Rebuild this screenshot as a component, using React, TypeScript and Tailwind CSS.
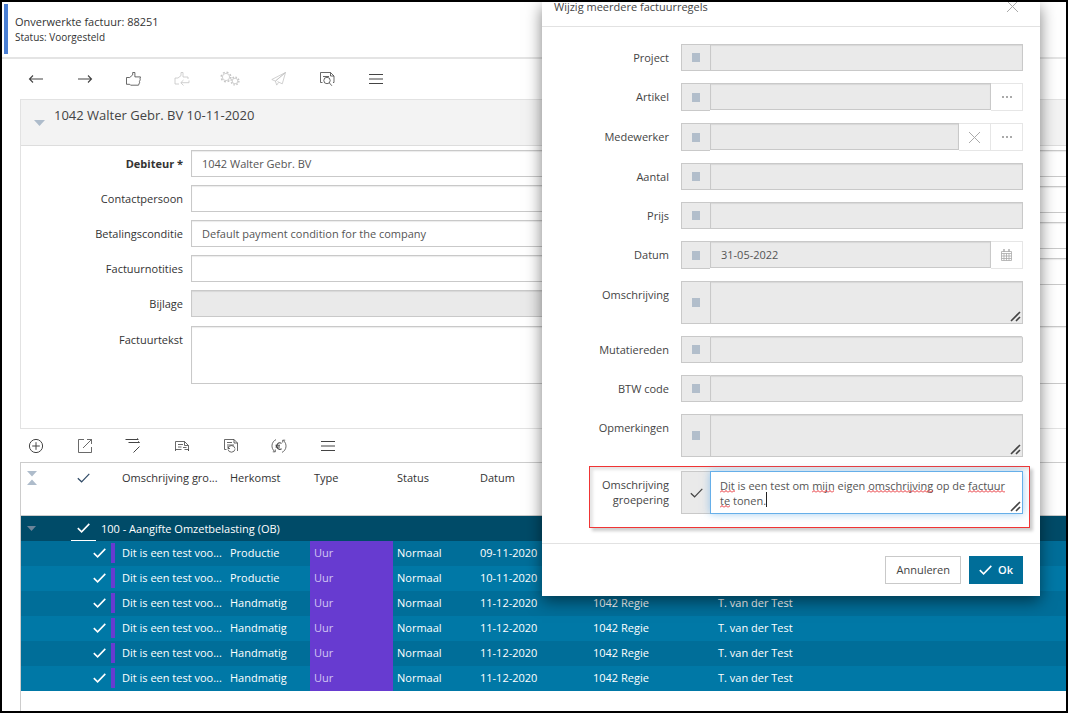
import { useId } from "react";
import type { ReactNode } from "react";

const strokeProps = {
  fill: "none",
  stroke: "currentColor",
  strokeWidth: 0.8,
  width: 16,
  height: 16,
  viewBox: "0 0 16 16",
  "aria-hidden": true,
} as const;

const icons: Record<string, ReactNode> = {
  back: <svg {...strokeProps} strokeWidth={1.1}><path d="M15 8H1.5M5 4.5 1.5 8 5 11.5" /></svg>,
  forward: <svg {...strokeProps} strokeWidth={1.1}><path d="M1 8h13.5M11 4.5 14.5 8 11 11.5" /></svg>,
  thumb: (
    <svg {...strokeProps}>
      <path d="M1.5 6.5h3.2l3-2.6V1.5h2.2v4.4h5.6l-.6 2.2.4.6-.9 1.9.3.6-1.2 3H5.6l-.8-.9H1.5z" />
    </svg>
  ),
  thumbBack: (
    <svg {...strokeProps}>
      <path d="M1 13V7h3l3-2.4V1.5h2V6h5v2M1 13h4M15 9.5v2.2H7M9.5 9 6.8 11.7 9.5 14.5" />
    </svg>
  ),
  gears: (
    <svg {...strokeProps} width={20} viewBox="0 0 20 16">
      <circle cx="6" cy="6" r="3.6" />
      <circle cx="6" cy="6" r="4.8" strokeDasharray="1.9 1.87" strokeWidth="1.5" />
      <circle cx="15" cy="10" r="2.8" />
      <circle cx="15" cy="10" r="3.9" strokeDasharray="1.5 1.56" strokeWidth="1.4" />
    </svg>
  ),
  send: <svg {...strokeProps}><path d="M14.5 1.5.8 8.5l3.6 1.6zM14.5 1.5 4.4 10.1l1.3 4 1.8-2.6M14.5 1.5l-3.2 11.3-4.8-2.2" /></svg>,
  preview: (
    <svg {...strokeProps}>
      <path d="M3.5 11.5h-2v-10h10l3.5 3.5v6.5h-1M4 5.5h6M11.5 1.5V5H15" />
      <circle cx="8" cy="9.5" r="3.2" />
      <path d="m10.3 11.8 2.6 3" />
    </svg>
  ),
  menu: <svg {...strokeProps} strokeWidth={1.2}><path d="M1 3.5h14M1 8h14M1 12.5h14" /></svg>,
  add: <svg {...strokeProps} strokeWidth={1}><circle cx="8" cy="8" r="6.6" /><path d="M8 4.2v7.6M4.2 8h7.6" /></svg>,
  external: <svg {...strokeProps}><path d="M7 1.5H1.5v13h13V9M6 10l8.5-8.5M10 1.5h4.5V6" /></svg>,
  rows: <svg {...strokeProps} strokeWidth={1}><path d="M.5 1.5h12.5M3.5 4.5h11M12 .5l1.5 1M13 3.5l1.5 1M8.5 14.5l6-6M5 4.5h3" /></svg>,
  line: <svg {...strokeProps}><path d="M1.5 13V3.5h9l4 4V13M1.5 11.5h6M4 6.5h5M4 9h3.5M10.5 3.5v4h4M14.5 13v-1.5h-4M9 9.5h3.5" /></svg>,
  pageRefresh: (
    <svg {...strokeProps}>
      <path d="M3.5 11.5h-2v-10h9.5l3.5 3.5v8M4 4.5h5M11 1.5V5h3.5M4 7h7" />
      <path d="M5 10.2a3.6 3.6 0 0 1 7 .3M12 11.3a3.6 3.6 0 0 1-7 .2M5 8v2.5h2" />
    </svg>
  ),
  euro: (
    <svg {...strokeProps}>
      <path d="M5 1.6A7 7 0 0 0 3.6 13.4M1.8 13.8h2.5v-2.3M11 14.4A7 7 0 0 0 12.4 2.6M14.2 2.2h-2.5v2.3" />
      <path d="M10.6 5.4A3.2 3.2 0 1 0 10.6 10.8M4.5 7.3H9M4.5 9H9" strokeWidth={1.1} />
    </svg>
  ),
};

function Check({ className, thin }: { className?: string; thin?: boolean }) {
  return (
    <svg
      className={className}
      width="13"
      height="10"
      viewBox="0 0 13 10"
      fill="none"
      stroke="currentColor"
      strokeWidth={thin ? 1.2 : 1.6}
      aria-hidden
    >
      <path d="M.8 5.2 4.6 8.8 12.3.9" />
    </svg>
  );
}

function Cross() {
  return (
    <svg width="13" height="13" viewBox="0 0 13 13" fill="none" stroke="currentColor" strokeWidth="1" aria-hidden>
      <path d="m1 1 11 11M12 1 1 12" />
    </svg>
  );
}

type Tool = { icon: string; label: string; disabled?: boolean };

function Toolbar({ tools, className }: { tools: Tool[]; className: string }) {
  return (
    <div className={`grid pl-[10px] ${className}`}>
      {tools.map((t) => (
        <button
          key={t.label}
          type="button"
          aria-label={t.label}
          disabled={t.disabled}
          className="flex items-center justify-center text-[#444] disabled:text-[#c4c4c4]"
        >
          {icons[t.icon]}
        </button>
      ))}
    </div>
  );
}

const topTools: Tool[] = [
  { icon: "back", label: "Vorige" },
  { icon: "forward", label: "Volgende" },
  { icon: "thumb", label: "Goedkeuren" },
  { icon: "thumbBack", label: "Terugzetten", disabled: true },
  { icon: "gears", label: "Verwerken", disabled: true },
  { icon: "send", label: "Versturen", disabled: true },
  { icon: "preview", label: "Voorbeeld" },
  { icon: "menu", label: "Menu" },
];

const lineTools: Tool[] = [
  { icon: "add", label: "Toevoegen" },
  { icon: "external", label: "Openen" },
  { icon: "rows", label: "Regels wijzigen" },
  { icon: "line", label: "Tekstregel" },
  { icon: "pageRefresh", label: "Vernieuwen" },
  { icon: "euro", label: "Valuta" },
  { icon: "menu", label: "Meer" },
];

const inputBase =
  "block min-w-0 border border-[#c9c9c9] bg-white px-2.5 text-[#555] shadow-[inset_0_1px_1px_rgba(0,0,0,0.08)] outline-none disabled:bg-[#eaeaea]";

function FormRow({ label, value, bold, disabled, area }: { label: string; value?: string; bold?: boolean; disabled?: boolean; area?: boolean }) {
  const id = useId();
  return (
    <div className="flex gap-2">
      <label htmlFor={id} className={`w-[162px] shrink-0 text-right leading-[27px] ${bold ? "font-bold" : ""}`}>
        {label}
      </label>
      {area ? (
        <textarea id={id} className={`${inputBase} h-[58px] flex-1 resize-none`} />
      ) : (
        <input id={id} defaultValue={value} disabled={disabled} className={`${inputBase} h-[27px] flex-1`} />
      )}
    </div>
  );
}

const lines = [
  ["Productie", "09-11-2020", "", ""],
  ["Productie", "10-11-2020", "", ""],
  ["Handmatig", "11-12-2020", "1042 Regie", "T. van der Test"],
  ["Handmatig", "11-12-2020", "1042 Regie", "T. van der Test"],
  ["Handmatig", "11-12-2020", "1042 Regie", "T. van der Test"],
  ["Handmatig", "11-12-2020", "1042 Regie", "T. van der Test"],
];

function LinesTable() {
  return (
    <table className="w-full table-fixed border-collapse text-left">
      <colgroup>
        <col className="w-[50px]" />
        <col className="w-[47px]" />
        <col className="w-[108px]" />
        <col className="w-[84px]" />
        <col className="w-[83px]" />
        <col className="w-[83px]" />
        <col className="w-[113px]" />
        <col className="w-[125px]" />
        <col />
      </colgroup>
      <thead>
        <tr className="h-[52px] border-b border-[#ccc] align-top text-[#333] *:px-1 *:pt-[7px] *:font-normal *:leading-4">
          <th>
            <svg className="ml-0.5 mt-px" width="10" height="14" viewBox="0 0 10 14" fill="#aebccb" aria-hidden>
              <path d="M0 0h10L5 5.5zM0 14h10L5 8.5z" />
            </svg>
          </th>
          <th><Check thin className="ml-0.5 mt-[3px] text-[#2f4a66]" /></th>
          <th className="truncate">Omschrijving gro...</th>
          <th>Herkomst</th>
          <th>Type</th>
          <th>Status</th>
          <th>Datum</th>
          <th />
          <th />
        </tr>
      </thead>
      <tbody className="text-white">
        <tr className="h-[25px] bg-[#004b68]">
          <td className="p-0">
            <svg className="ml-1.5" width="9" height="5" viewBox="0 0 9 5" fill="#6c8499" aria-hidden>
              <path d="M0 0h9L4.5 5z" />
            </svg>
          </td>
          <td colSpan={8} className="p-0">
            <div className="flex h-[25px] items-stretch gap-[5px]">
              <span className="flex w-[25px] items-center justify-center border-b border-white"><Check /></span>
              <span className="leading-[25px]">100 - Aangifte Omzetbelasting (OB)</span>
            </div>
          </td>
        </tr>
        {lines.map(([origin, date, project, employee], i) => (
          <tr key={i} className="h-[25px] odd:bg-[#0078a6] even:bg-[#006e99] *:px-1 *:py-0">
            <td />
            <td>
              <div className="-mr-px flex items-center justify-end gap-[5px]">
                <Check />
                <span className="h-5 w-1 bg-[#673bd0]" />
              </div>
            </td>
            <td className="truncate">Dit is een test voo...</td>
            <td>{origin}</td>
            <td className="bg-[#673bd0] text-[#d2c6f2]">Uur</td>
            <td>Normaal</td>
            <td>{date}</td>
            <td>{project}</td>
            <td>{employee}</td>
          </tr>
        ))}
      </tbody>
    </table>
  );
}

function Grip() {
  return (
    <svg className="pointer-events-none absolute bottom-0.5 right-0.5" width="11" height="11" viewBox="0 0 11 11" stroke="#444" strokeWidth="1.6" aria-hidden>
      <path d="M1 10 10 1M6 10l4-4" />
    </svg>
  );
}

function Dots() {
  return (
    <svg width="10" height="2" viewBox="0 0 10 2" fill="currentColor" aria-hidden>
      <path d="M0 0h2v2H0zM4 0h2v2H4zM8 0h2v2H8z" />
    </svg>
  );
}

function Calendar() {
  return (
    <svg width="11" height="12" viewBox="0 0 11 12" fill="none" stroke="currentColor" strokeWidth="0.8" aria-hidden>
      <path d="M.5 2.5h10v9H.5zM.5 4.5h10M.5 7h10M.5 9.5h10M3 4.5v7M5.5 4.5v7M8 4.5v7" />
      <path d="M3 0v3M8 0v3" strokeWidth="1.4" />
    </svg>
  );
}

const addons: Record<string, { label: string; icon: ReactNode }> = {
  search: { label: "Zoeken", icon: <Dots /> },
  clear: { label: "Wissen", icon: <Cross /> },
  date: { label: "Kalender", icon: <Calendar /> },
};

type DialogFieldProps = { label: string; value?: string; area?: boolean; rounded?: boolean; buttons?: string[] };

function DialogField({ label, value, area, rounded, buttons = [] }: DialogFieldProps) {
  const id = useId();
  return (
    <div className="flex gap-3">
      <label htmlFor={id} className="w-[127px] shrink-0 text-right leading-[27px]">{label}</label>
      <div className={`flex min-w-0 flex-1 ${area ? "h-[43px]" : buttons.length ? "h-7" : "h-[27px]"}`}>
        <button
          type="button"
          aria-label={`${label} wijzigen`}
          className="flex w-[29px] shrink-0 items-center justify-center border border-r-0 border-[#c9c9c9] bg-[#eaeaea]"
        >
          <span className="h-[9px] w-2 bg-[#b2becb]" />
        </button>
        {area ? (
          <div className="relative flex flex-1">
            <textarea id={id} disabled className={`${inputBase} flex-1 resize-none`} />
            <Grip />
          </div>
        ) : (
          <input id={id} disabled defaultValue={value} className={`${inputBase} h-[27px] flex-1 ${rounded ? "rounded-r-xs" : ""}`} />
        )}
        {buttons.map((b) => (
          <button
            key={b}
            type="button"
            disabled
            aria-label={`${label}: ${addons[b].label}`}
            className="flex w-8 shrink-0 items-center justify-center border border-l-0 border-[#e6e6e6] text-[#aaa]"
          >
            {addons[b].icon}
          </button>
        ))}
      </div>
    </div>
  );
}

function Squiggle({ className }: { className: string }) {
  const id = useId();
  return (
    <svg className={`pointer-events-none absolute h-[3px] ${className}`} aria-hidden>
      <pattern id={id} width="4" height="3" patternUnits="userSpaceOnUse">
        <path d="M0 2.5 2 .5l2 2" fill="none" stroke="#e5252c" strokeWidth="1" />
      </pattern>
      <rect width="100%" height="3" fill={`url(#${id})`} />
    </svg>
  );
}

function EditDialog() {
  return (
    <section
      role="dialog"
      aria-labelledby="dialog-title"
      className="absolute right-[26px] top-0 w-[498px] bg-white text-[#444] shadow-[0_5px_15px_rgba(0,0,0,0.5)]"
    >
      <header className="flex h-[25px] items-start justify-between border-b border-[#e2e2e2] pl-3 pr-[21px]">
        <h2 id="dialog-title" className="leading-[10px]">Wijzig meerdere factuurregels</h2>
        <button type="button" aria-label="Sluiten" className="-mt-0.5 text-[#aaa]"><Cross /></button>
      </header>
      <div className="flex flex-col gap-3 pr-[17px] pt-[17px]">
        <DialogField label="Project" />
        <DialogField label="Artikel" buttons={["search"]} />
        <DialogField label="Medewerker" buttons={["clear", "search"]} />
        <DialogField label="Aantal" />
        <DialogField label="Prijs" />
        <DialogField label="Datum" value="31-05-2022" buttons={["date"]} />
        <DialogField label="Omschrijving" area />
        <DialogField label="Mutatiereden" rounded />
        <DialogField label="BTW code" rounded />
        <DialogField label="Opmerkingen" area />
      </div>
      <div className="ml-[47px] mr-2.5 mt-[9px] flex gap-3 border border-[#f03434] pb-[13px] pr-1.5 pt-1 shadow-[3px_3px_3px_rgba(0,0,0,0.2),inset_3px_3px_3px_rgba(0,0,0,0.1)]">
        <label htmlFor="grouping" className="w-[79px] shrink-0 pt-1.5 text-right leading-[15px]">
          Omschrijving groepering
        </label>
        <div className="flex min-w-0 flex-1">
          <button
            type="button"
            aria-label="Omschrijving groepering wijzigen"
            className="flex w-[29px] shrink-0 items-center justify-center border border-r-0 border-[#c9c9c9] bg-[#eaeaea]"
          >
            <Check thin />
          </button>
          <div className="relative flex h-[43px] flex-1">
            <textarea
              id="grouping"
              spellCheck={false}
              defaultValue={"Dit is een test om mijn eigen omschrijving op de factuur\nte tonen."}
              className="block min-w-0 flex-1 resize-none overflow-hidden border border-[#66afe9] px-[9px] pt-1.5 leading-[15px] text-[#555] shadow-[0_0_8px_rgba(102,175,233,0.6)] outline-none"
            />
            <Squiggle className="left-2.5 top-[19px] w-[15px]" />
            <Squiggle className="left-[102px] top-[19px] w-[22px]" />
            <Squiggle className="left-[157px] top-[19px] w-[66px]" />
            <Squiggle className="left-[258px] top-[19px] w-[37px]" />
            <Squiggle className="left-2.5 top-[34px] w-2.5" />
            <span className="absolute left-14 top-[21px] h-[15px] w-px bg-[#222]" />
            <Grip />
          </div>
        </div>
      </div>
      <footer className="mt-[15px] flex justify-end gap-2 border-t border-[#e2e2e2] pb-3 pr-[17px] pt-3">
        <button type="button" className="h-7 border border-[#c9c9c9] px-2.5">Annuleren</button>
        <button type="button" className="flex h-7 items-center gap-1.5 bg-[#006e99] px-2.5 font-semibold text-white">
          <Check />
          Ok
        </button>
      </footer>
    </section>
  );
}

export default function App() {
  return (
    <main className="relative flex min-h-screen flex-col overflow-hidden border-2 border-black bg-white font-['Open_Sans',sans-serif] text-[11px] text-[#333]">
      <header className="border-b-2 border-[#e4e4e4] pb-[3px] pl-0.5 pt-0.5">
        <div className="flex h-[50px] flex-col justify-center border-l-4 border-[#4a7fd4] pl-[7px]">
          <h1 className="leading-4">Onverwerkte factuur: 88251</h1>
          <p className="text-[10px] leading-[14px]">Status: Voorgesteld</p>
        </div>
      </header>
      <Toolbar tools={topTools} className="h-10 w-[398px] grid-cols-8" />

      <section className="ml-[18px] border-y border-l border-[#e2e2e2]">
        <div className="flex h-[46px] items-start border-b border-[#ddd] bg-[#f3f3f3] pl-[13px] pt-[7px]">
          <button type="button" aria-label="Inklappen" className="pt-[13px]">
            <svg width="11" height="6" viewBox="0 0 11 6" fill="#aebccb" aria-hidden><path d="M0 0h11L5.500 6z" /></svg>
          </button>
          <h2 className="pl-[9px] text-[13px] leading-4 text-[#444]">1042 Walter Gebr. BV 10-11-2020</h2>
        </div>
        <form className="pb-11 pt-1">
          <div className="grid grid-cols-[3fr_1fr]">
            <div className="flex flex-col gap-2">
              <FormRow label="Debiteur *" value="1042 Walter Gebr. BV" bold />
              <FormRow label="Contactpersoon" />
              <FormRow label="Betalingsconditie" value="Default payment condition for the company" />
              <FormRow label="Factuurnotities" />
              <FormRow label="Bijlage" disabled />
            </div>
            <div className="-mr-px flex flex-col gap-[9px] pl-4">
              <input aria-label="Referentie" className={`${inputBase} h-[27px]`} />
              <input aria-label="Factuurdatum" className={`${inputBase} h-[27px]`} />
              <input aria-label="Vervaldatum" className={`${inputBase} h-[27px]`} />
              <input aria-label="Layout" className={`${inputBase} h-[27px]`} />
            </div>
          </div>
          <div className="-mr-px pt-[9px]">
            <FormRow label="Factuurtekst" area />
          </div>
        </form>
      </section>

      <Toolbar tools={lineTools} className="h-[33px] w-[350px] grid-cols-7" />
      <section className="ml-[18px] flex-1 border-l border-t border-[#ccc]">
        <LinesTable />
      </section>
      <EditDialog />
    </main>
  );
}
